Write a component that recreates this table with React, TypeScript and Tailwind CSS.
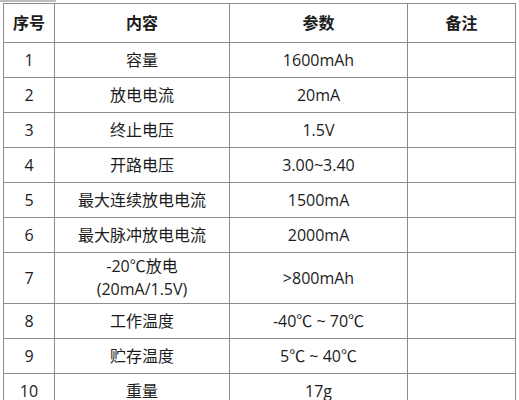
import * as React from "react";

interface SpecRow {
  no: string;
  item: React.ReactNode;
  value: string;
  tall?: boolean;
}

const ROWS: SpecRow[] = [
  { no: "1", item: "容量", value: "1600mAh" },
  { no: "2", item: "放电电流", value: "20mA" },
  { no: "3", item: "终止电压", value: "1.5V" },
  { no: "4", item: "开路电压", value: "3.00~3.40" },
  { no: "5", item: "最大连续放电电流", value: "1500mA" },
  { no: "6", item: "最大脉冲放电电流", value: "2000mA" },
  {
    no: "7",
    item: (
      <>
        -20℃放电
        <br />
        (20mA/1.5V)
      </>
    ),
    value: ">800mAh",
    tall: true,
  },
  { no: "8", item: "工作温度", value: "-40℃ ~ 70℃" },
  { no: "9", item: "贮存温度", value: "5℃ ~ 40℃" },
  { no: "10", item: "重量", value: "17g" },
];

const cell = "border border-[#8c8c8c] text-center align-middle p-0";

export default function App() {
  return (
    <div
      className="w-[519px] h-[400px] overflow-hidden bg-white text-[16px] text-[#1c1c1c]"
      style={{ fontFamily: '"Open Sans", "Noto Sans CJK SC", sans-serif' }}
    >
      <div className="h-[2px] w-[56px] bg-[#bdbdbd]" />
      <table className="ml-[3px] mt-[1px] border-collapse table-fixed w-[512px]">
        <colgroup>
          <col className="w-[51px]" />
          <col className="w-[175px]" />
          <col className="w-[178px]" />
          <col className="w-[108px]" />
        </colgroup>
        <thead>
          <tr className="h-[39px] font-bold">
            <th className={cell}>序号</th>
            <th className={cell}>内容</th>
            <th className={cell}>参数</th>
            <th className={cell}>备注</th>
          </tr>
        </thead>
        <tbody>
          {ROWS.map((row) => (
            <tr key={row.no} className={row.tall ? "h-[51px]" : "h-[35px]"}>
              <td className={cell}>{row.no}</td>
              <td className={`${cell} leading-[23px]`}>{row.item}</td>
              <td className={cell}>{row.value}</td>
              <td className={cell} />
            </tr>
          ))}
        </tbody>
      </table>
    </div>
  );
}
